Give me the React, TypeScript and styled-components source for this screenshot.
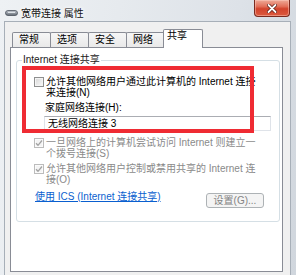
import React from "react";
import styled, { createGlobalStyle, css } from "styled-components";

const Global = createGlobalStyle`
  html, body { margin: 0; padding: 0; width: 296px; height: 275px; overflow: hidden; background: #fff; }
  body { font-family: "Liberation Sans", "Noto Sans CJK SC", sans-serif; font-size: 10px; color: #000; }
  * { box-sizing: border-box; }
`;

const Window = styled.div`
  width: 296px;
  height: 275px;
  padding: 0 5px 0 4px;
  display: flex;
  flex-direction: column;
  overflow: hidden;
  background: linear-gradient(100deg, #eef1f4 0%, #e6eaee 35%, #dde2e8 70%, #d0d6dd 100%);
`;

const TitleBar = styled.div`
  height: 21px;
  flex: none;
  display: flex;
  align-items: flex-start;
  padding-left: 1px;
`;

const TitleIcon = styled.svg`
  width: 13px;
  height: 6px;
  margin-top: 10px;
  margin-right: 3px;
  flex: none;
`;

const TitleText = styled.span`
  margin-top: 8px;
  line-height: 11px;
  font-size: 10px;
  color: #111;
  text-shadow: 0 0 4px #fff, 0 0 6px #fff;
`;

const CloseButton = styled.div`
  margin-left: auto;
  margin-right: 1px;
  width: 36px;
  height: 17px;
  border: 1px solid #7a2a1f;
  border-top: none;
  border-radius: 0 0 4px 4px;
  background: linear-gradient(#eeaa98 0%, #e2705a 40%, #d2432c 55%, #dc5a3e 100%);
  box-shadow: inset 0 0 0 1px rgba(255, 210, 200, 0.45);
  display: flex;
  align-items: center;
  justify-content: center;
`;

const Client = styled.div`
  flex: 1;
  background: #f0f0f0;
  border: 1px solid #a7afb8;
  border-bottom: none;
  padding: 7px 7px 0 5px;
  display: flex;
  flex-direction: column;
`;

const TabRow = styled.div`
  height: 18px;
  display: flex;
  align-items: flex-end;
  padding-left: 2px;
  position: relative;
  z-index: 1;
`;

const Tab = styled.div<{ $active?: boolean }>`
  width: 39px;
  height: 15px;
  margin-left: -1px;
  border: 1px solid #898c95;
  border-bottom: none;
  border-radius: 2px 2px 0 0;
  background: linear-gradient(#f6f6f6, #e9e9e9);
  padding-left: 6px;
  line-height: 13px;
  font-size: 10px;
  color: #000;
  &:first-child { margin-left: 0; }
  ${(p) =>
    p.$active &&
    css`
      width: 40px;
      height: 19px;
      margin-left: -2px;
      margin-bottom: -1px;
      background: #fff;
      padding-left: 3px;
      line-height: 12px;
    `}
`;

const Panel = styled.div`
  position: relative;
  height: 225px;
  flex: none;
  background: #fff;
  border: 1px solid #898c95;
  padding: 6px 2px 0 5px;
`;

const Group = styled.fieldset`
  margin: 0;
  padding: 0;
  width: 264px;
  min-width: 0;
  border: 1px solid #d5dfe5;
  border-radius: 3px;
`;

const Legend = styled.legend`
  padding: 0 1px;
  margin-left: 5px;
  line-height: 12px;
  font-size: 10px;
  color: #1a1a1a;
`;

const GroupBody = styled.div`
  padding: 10px 15px 13px 17px;
  display: flex;
  flex-direction: column;
`;

const CheckRow = styled.div<{ $gap?: number }>`
  display: flex;
  align-items: flex-start;
  margin-top: ${(p) => p.$gap ?? 0}px;
`;

const Box = styled.span<{ $disabled?: boolean }>`
  width: 10px;
  height: 10px;
  margin-top: 1px;
  flex: none;
  border: 1px solid ${(p) => (p.$disabled ? "#bcbcbc" : "#8e8f8f")};
  background: ${(p) =>
    p.$disabled ? "#f4f4f4" : "linear-gradient(135deg, #d6d6d6, #fafafa)"};
  box-shadow: inset 0 0 0 1px ${(p) => (p.$disabled ? "#fbfbfb" : "#f4f4f4")};
  display: flex;
  align-items: center;
  justify-content: center;
`;

const CheckText = styled.span<{ $disabled?: boolean }>`
  padding-left: 2px;
  line-height: 11px;
  font-size: 10px;
  color: ${(p) => (p.$disabled ? "#8a8a8a" : "#000")};
`;

const FieldLabel = styled.div`
  margin-top: 4px;
  padding-left: 11px;
  line-height: 11px;
  font-size: 10px;
`;

const TextInput = styled.div`
  margin-top: 3px;
  margin-left: 10px;
  width: 227px;
  height: 15px;
  border: 1px solid #dfe3e9;
  border-top-color: #abadb3;
  background: #fff;
  padding-left: 3px;
  line-height: 13px;
  font-size: 10px;
  color: #000;
`;

const Footer = styled.div`
  margin-top: 6px;
  display: flex;
  justify-content: space-between;
  align-items: flex-start;
`;

const Link = styled.a`
  padding-left: 1px;
  line-height: 11px;
  font-size: 10px;
  color: #0a5fcf;
  text-decoration: underline;
  cursor: pointer;
`;

const Button = styled.div`
  margin-top: 2px;
  width: 58px;
  height: 15px;
  border: 1px solid #adb2b5;
  border-radius: 3px;
  background: #f4f4f4;
  color: #838383;
  font-size: 10px;
  line-height: 13px;
  text-align: center;
`;

const Highlight = styled.div`
  position: absolute;
  left: 11px;
  top: 18px;
  width: 232px;
  height: 67px;
  border: 4px solid #ef2b33;
  pointer-events: none;
`;

const Check = () => (
  <svg width="8" height="8" viewBox="0 0 8 8">
    <path d="M1 4.2 L3 6.3 L7 1.5" fill="none" stroke="#a2a2a2" strokeWidth="1.3" />
  </svg>
);

export default function App() {
  return (
    <>
      <Global />
      <Window>
        <TitleBar>
          <TitleIcon viewBox="0 0 13 6">
            <defs>
              <linearGradient id="ic" x1="0" y1="0" x2="0" y2="1">
                <stop offset="0" stopColor="#c9ced6" />
                <stop offset="1" stopColor="#5f6770" />
              </linearGradient>
            </defs>
            <rect x="0.5" y="0.5" width="12" height="5" rx="2.5" fill="url(#ic)" stroke="#4a525c" strokeWidth="0.8" />
            <line x1="3" y1="2.5" x2="10" y2="2.5" stroke="#eef2f6" strokeWidth="0.8" />
          </TitleIcon>
          <TitleText>宽带连接 属性</TitleText>
          <CloseButton>
            <svg width="10" height="9" viewBox="0 0 10 9">
              <path d="M1.5 1 L8.5 8 M8.5 1 L1.5 8" stroke="#5a1a12" strokeWidth="3.4" strokeLinecap="round" />
              <path d="M1.5 1 L8.5 8 M8.5 1 L1.5 8" stroke="#fff" strokeWidth="1.8" strokeLinecap="round" />
            </svg>
          </CloseButton>
        </TitleBar>
        <Client>
          <TabRow>
            <Tab>常规</Tab>
            <Tab>选项</Tab>
            <Tab>安全</Tab>
            <Tab>网络</Tab>
            <Tab $active>共享</Tab>
          </TabRow>
          <Panel>
            <Group>
              <Legend>Internet 连接共享</Legend>
              <GroupBody>
                <CheckRow>
                  <Box />
                  <CheckText>
                    允许其他网络用户通过此计算机的 Internet 连接
                    <br />
                    来连接(N)
                  </CheckText>
                </CheckRow>
                <FieldLabel>家庭网络连接(H):</FieldLabel>
                <TextInput>无线网络连接 3</TextInput>
                <CheckRow $gap={6}>
                  <Box $disabled>
                    <Check />
                  </Box>
                  <CheckText $disabled>
                    一旦网络上的计算机尝试访问 Internet 则建立一
                    <br />
                    个拨号连接(S)
                  </CheckText>
                </CheckRow>
                <CheckRow $gap={4}>
                  <Box $disabled>
                    <Check />
                  </Box>
                  <CheckText $disabled>
                    允许其他网络用户控制或禁用共享的 Internet 连
                    <br />
                    接(O)
                  </CheckText>
                </CheckRow>
                <Footer>
                  <Link>使用 ICS (Internet 连接共享)</Link>
                  <Button>设置(G)...</Button>
                </Footer>
              </GroupBody>
            </Group>
            <Highlight />
          </Panel>
        </Client>
      </Window>
    </>
  );
}
